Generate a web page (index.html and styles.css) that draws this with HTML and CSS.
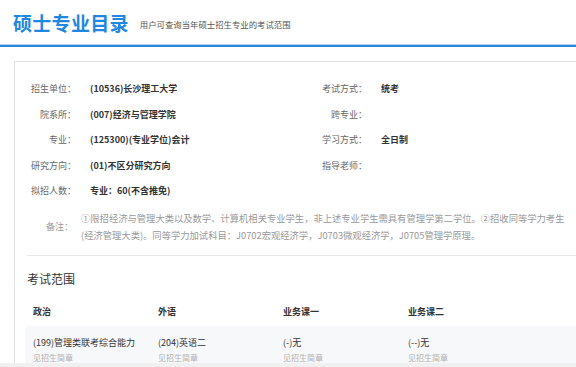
FILE: index.html
```html
<!DOCTYPE html>
<html lang="zh-CN">
<head>
  <meta charset="UTF-8">
  <meta name="viewport" content="width=device-width, initial-scale=1.0">
  <title>硕士专业目录</title>
  <link rel="stylesheet" href="styles.css">
</head>
<body>
  <div class="page-head">
    <h1 class="page-title">硕士专业目录</h1>
    <span class="page-sub">用户可查询当年硕士招生专业的考试范围</span>
  </div>

  <div class="card">
    <div class="info-grid">
      <div class="info-item"><span class="info-label">招生单位：</span><span class="info-value">(10536)长沙理工大学</span></div>
      <div class="info-item"><span class="info-label">考试方式：</span><span class="info-value">统考</span></div>
      <div class="info-item"><span class="info-label">院系所：</span><span class="info-value">(007)经济与管理学院</span></div>
      <div class="info-item"><span class="info-label">跨专业：</span><span class="info-value"></span></div>
      <div class="info-item"><span class="info-label">专业：</span><span class="info-value">(125300)(专业学位)会计</span></div>
      <div class="info-item"><span class="info-label">学习方式：</span><span class="info-value">全日制</span></div>
      <div class="info-item"><span class="info-label">研究方向：</span><span class="info-value">(01)不区分研究方向</span></div>
      <div class="info-item"><span class="info-label">指导老师：</span><span class="info-value"></span></div>
      <div class="info-item"><span class="info-label">拟招人数：</span><span class="info-value">专业：60(不含推免)</span></div>
    </div>

    <div class="remark">
      <span class="remark-label">备注：</span>
      <p class="remark-text">①限招经济与管理大类以及数学、计算机相关专业学生，非上述专业学生需具有管理学第二学位。②招收同等学力考生<br>(经济管理大类)。同等学力加试科目：J0702宏观经济学，J0703微观经济学，J0705管理学原理。</p>
    </div>

    <div class="scope">
      <h3 class="scope-title">考试范围</h3>
      <table class="scope-table">
        <thead>
          <tr>
            <th>政治</th>
            <th>外语</th>
            <th>业务课一</th>
            <th>业务课二</th>
          </tr>
        </thead>
        <tbody>
          <tr>
            <td><div class="subject">(199)管理类联考综合能力</div><div class="hint">见招生简章</div></td>
            <td><div class="subject">(204)英语二</div><div class="hint">见招生简章</div></td>
            <td><div class="subject">(-)无</div><div class="hint">见招生简章</div></td>
            <td><div class="subject">(--)无</div><div class="hint">见招生简章</div></td>
          </tr>
        </tbody>
      </table>
    </div>
  </div>

  <div class="h-scroll"></div>
</body>
</html>
```

FILE: styles.css
```css
html, body {
  overflow: hidden;
}

body {
  margin: 0;
  padding: 0;
  background: #fff;
  font-family: "Noto Sans CJK SC", "Noto Sans", sans-serif;
  color: #333;
}

.page-head {
  display: flex;
  align-items: center;
  height: 45px;
  padding-left: 13px;
  border-bottom: 2px solid #2a86d9;
  box-shadow: inset 0 -1px 0 #a9d2f4;
}

.page-title {
  margin: 0;
  font-size: 19px;
  font-weight: bold;
  line-height: 24px;
  letter-spacing: 0.3px;
  color: #1f87e0;
}

.page-sub {
  margin: 3px 0 0 11px;
  font-size: 8.4px;
  line-height: 12px;
  color: #555;
}

.card {
  width: 620px;
  margin: 14px 0 0 14px;
  border: 1px solid #e2e2e2;
  border-right: none;
  padding-top: 14px;
}

.info-grid {
  display: grid;
  grid-template-columns: 291px 291px;
}

.info-item {
  display: flex;
  height: 25.5px;
  align-items: center;
  font-size: 9px;
}

.info-label {
  width: 61px;
  text-align: right;
  color: #666;
}

.info-value {
  margin-left: 14px;
  font-weight: bold;
  color: #333;
}

.remark {
  display: flex;
  align-items: center;
  margin-top: 6px;
}

.remark-label {
  width: 58px;
  text-align: right;
  font-size: 9px;
  color: #999;
}

.remark-text {
  margin: 0 0 0 8px;
  font-size: 9.3px;
  line-height: 17px;
  color: #999;
  white-space: nowrap;
}

.scope {
  margin: 11px 0 0 12px;
  border-top: 1px solid #e8e8e8;
}

.scope-title {
  margin: 15px 0 0 0;
  font-size: 12px;
  font-weight: normal;
  line-height: 16px;
  color: #333;
}

.scope-table {
  width: calc(100% + 2px);
  table-layout: fixed;
  margin: 11px 0 0 -2px;
  border-collapse: collapse;
}

.scope-table th,
.scope-table td {
  padding: 0 8px;
  text-align: left;
  font-size: 9px;
  vertical-align: top;
}

.scope-table th:not(:last-child) {
  width: 109px;
}

.scope-table th {
  height: 28px;
  vertical-align: middle;
  font-weight: bold;
  color: #333;
}

.scope-table td {
  background: #f7f8fa;
  padding-top: 10px;
}

.subject {
  line-height: 14px;
  color: #333;
}

.hint {
  line-height: 15px;
  font-size: 8px;
  color: #b0b0b0;
}

.h-scroll {
  position: fixed;
  left: 0;
  right: 0;
  bottom: 0;
  height: 4px;
  background: #f0f0f0;
}
```
